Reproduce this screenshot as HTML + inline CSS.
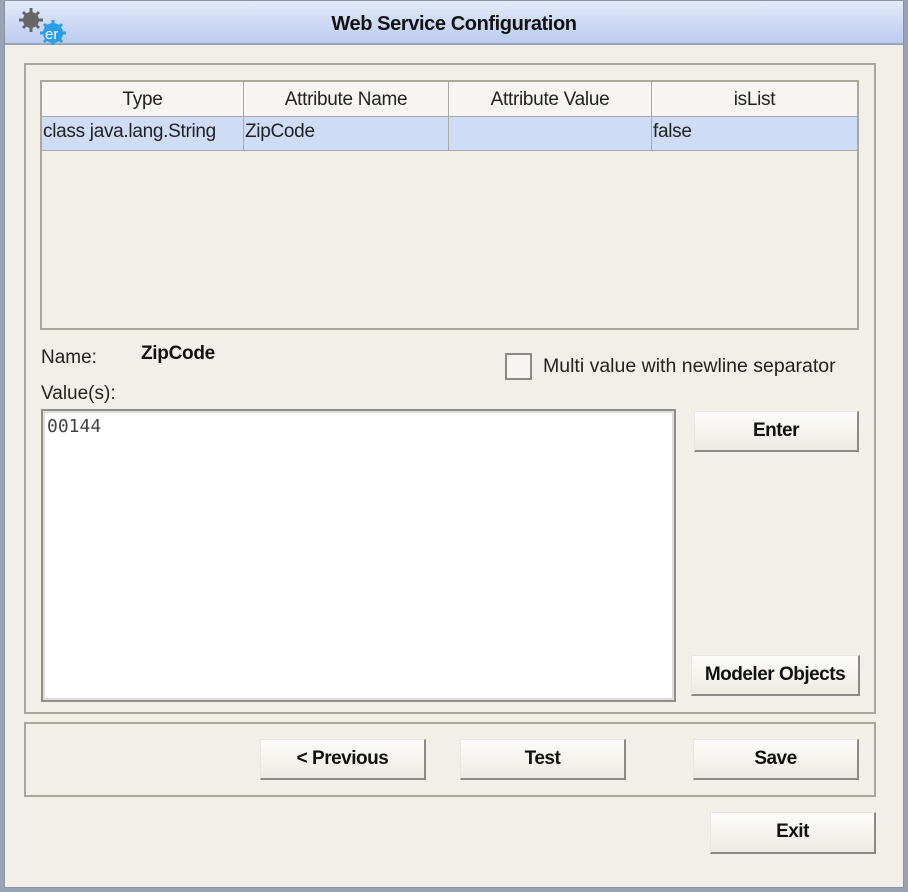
<!DOCTYPE html><html><head><style>
*{box-sizing:border-box;margin:0;padding:0}
body{width:908px;height:892px;background:#9aa3b5;position:relative;overflow:hidden;font-family:"Liberation Sans",sans-serif}
.win{position:absolute;left:4px;top:0;width:900px;height:888px;background:#f1efe8;border:1px solid #8c93a3}
.a{position:absolute}
.title{left:0;top:0;width:898px;height:44px;background:linear-gradient(#e2eafa,#bccbef);border-bottom:2px solid #9ca5b5}
.panel{border:2px solid #a9a69c}
.btn{position:absolute;background:linear-gradient(#fdfdfb,#eceae2);border-right:2px solid #8a8a88;border-bottom:2px solid #8a8a88;border-top:1px solid #e6e6e6;border-left:1px solid #e6e6e6;font-weight:bold;font-size:19px;text-align:center;line-height:37px;color:#111;letter-spacing:-0.5px}
.cell{position:absolute;font-size:19px;color:#222;border-right:1px solid #a9a9a9;letter-spacing:-0.3px}
</style></head><body>
<div class="win">
<div class="a title">
<svg class="a" style="left:8px;top:2px" width="58" height="42">
<circle cx="18" cy="17" r="8" fill="#666"/><g stroke="#666" stroke-width="3"><line x1="18" y1="5" x2="18" y2="29"/><line x1="6" y1="17" x2="30" y2="17"/><line x1="10" y1="9" x2="26" y2="25"/><line x1="26" y1="9" x2="10" y2="25"/></g>
<circle cx="40" cy="30" r="10" fill="#2a9ee8"/><g stroke="#2a9ee8" stroke-width="3"><line x1="40" y1="17" x2="40" y2="42"/><line x1="27" y1="30" x2="53" y2="30"/><line x1="31" y1="21" x2="49" y2="39"/><line x1="49" y1="21" x2="31" y2="39"/></g>
<text x="32" y="36" font-size="15" fill="#fff" font-family="Liberation Sans">er</text></svg>
<div class="a" style="left:0;width:898px;top:12px;text-align:center;font-weight:bold;font-size:20px;color:#111;letter-spacing:-0.4px">Web Service Configuration</div>
</div>
<div class="a panel" style="left:19px;top:62px;width:852px;height:651px"></div>
<div class="a" style="left:35px;top:79px;width:819px;height:250px;border:2px solid #a9a69c;background:#f1efe8"></div>
<div class="a" style="left:37px;top:81px;width:815px;height:35px;background:#f6f5f1;border-bottom:1px solid #a9a9a9"></div>
<div class="cell" style="left:37px;top:81px;width:202px;height:35px;line-height:35px;text-align:center">Type</div>
<div class="cell" style="left:239px;top:81px;width:205px;height:35px;line-height:35px;text-align:center">Attribute Name</div>
<div class="cell" style="left:444px;top:81px;width:203px;height:35px;line-height:35px;text-align:center">Attribute Value</div>
<div class="cell" style="left:647px;top:81px;width:205px;height:35px;line-height:35px;text-align:center;border:0">isList</div>
<div class="a" style="left:37px;top:116px;width:815px;height:34px;background:#cfdcf6;border-bottom:1px solid #a9a9a9"></div>
<div class="cell" style="left:37px;top:116px;width:202px;height:34px;line-height:30px;padding-left:1px">class java.lang.String</div>
<div class="cell" style="left:239px;top:116px;width:205px;height:34px;line-height:30px;padding-left:1px">ZipCode</div>
<div class="cell" style="left:444px;top:116px;width:203px;height:34px"></div>
<div class="cell" style="left:647px;top:116px;width:205px;height:34px;line-height:30px;padding-left:1px;border:0">false</div>
<div class="a" style="left:36px;top:346px;font-size:19px;color:#222">Name:</div>
<div class="a" style="left:136px;top:342px;font-size:19px;font-weight:bold;color:#111;letter-spacing:-0.3px">ZipCode</div>
<div class="a" style="left:500px;top:352px;width:27px;height:27px;border:2px solid #8a8a88;background:#f6f5f1"></div>
<div class="a" style="left:538px;top:354px;font-size:19.5px;color:#222">Multi value with newline separator</div>
<div class="a" style="left:36px;top:382px;font-size:19px;color:#222">Value(s):</div>
<div class="a" style="left:36px;top:408px;width:635px;height:293px;border:2px solid #8f8f8c;background:#fff;box-shadow:inset 0 0 0 2px #ddd"></div>
<div class="a" style="left:42px;top:415px;font-size:18px;font-family:'DejaVu Sans Mono',monospace;color:#444">00144</div>
<div class="btn" style="left:689px;top:410px;width:165px;height:41px">Enter</div>
<div class="btn" style="left:686px;top:654px;width:169px;height:41px">Modeler Objects</div>
<div class="a panel" style="left:19px;top:721px;width:852px;height:75px"></div>
<div class="btn" style="left:255px;top:738px;width:166px;height:41px">&lt; Previous</div>
<div class="btn" style="left:455px;top:738px;width:166px;height:41px">Test</div>
<div class="btn" style="left:688px;top:738px;width:166px;height:41px">Save</div>
<div class="btn" style="left:705px;top:811px;width:166px;height:42px">Exit</div>
</div>
</body></html>
